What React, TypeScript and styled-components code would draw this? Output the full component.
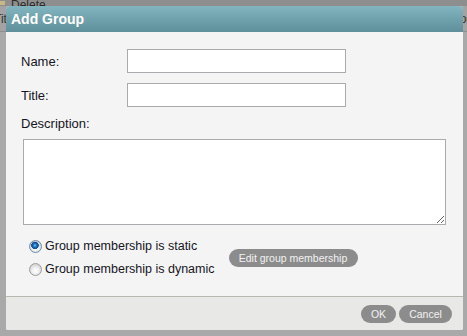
import React from "react";
import styled, { createGlobalStyle } from "styled-components";

const GlobalStyle = createGlobalStyle`
    html, body {
        margin: 0;
        padding: 0;
        background: #aaaaaa;
    }
    body {
        font-family: "Liberation Sans", Arial, sans-serif;
    }
`

const Page = styled.div`
    position: relative;
    width: 467px;
    height: 336px;
    overflow: hidden;
    background: #a9a9a9;
`

const Toolbar = styled.div`
    height: 6px;
    background: #8e8e8e;
    display: flex;
    align-items: flex-end;
    gap: 6px;
    overflow: hidden;
`

const ToolIcon = styled.span`
    width: 5px;
    height: 4px;
    background: #c9b887;
    margin-bottom: 1px;
`

const ToolText = styled.span`
    font-size: 12px;
    line-height: 12px;
    color: #2a2a2a;
    margin-bottom: -5px;
`

const HeaderRow = styled.div`
    height: 25px;
    background: #a3a3a3;
    border-bottom: 1px solid #8f8f8f;
    display: flex;
    justify-content: space-between;
    align-items: center;
    font-size: 12px;
    color: #333;
`

const HeaderCell = styled.span<{ $shift: number }>`
    margin-left: ${(p) => p.$shift}px;
    margin-right: ${(p) => (p.$shift < 0 ? 0 : -6)}px;
`

const Dialog = styled.div`
    position: absolute;
    left: 6px;
    top: 6px;
    width: 457px;
    height: 324px;
    display: flex;
    flex-direction: column;
    border-radius: 4px 4px 2px 2px;
    overflow: hidden;
    background: #f4f4f4;
`

const TitleBar = styled.div`
    height: 26px;
    display: flex;
    align-items: center;
    padding-left: 5px;
    background: linear-gradient(#82b5bf, #5e8f9a);
    color: #ffffff;
    font-weight: bold;
    font-size: 14px;
`

const Body = styled.div`
    flex: 1;
    padding: 17px 0 0 0;
    display: flex;
    flex-direction: column;
`

const FormGrid = styled.div`
    display: grid;
    grid-template-columns: 106px 219px;
    row-gap: 10px;
    padding-left: 15px;
    align-items: center;
`

const Label = styled.label`
    font-size: 13px;
    line-height: 15px;
    color: #141424;
`

const DescLabel = styled(Label)`
    display: block;
    margin: 9px 0 0 15px;
`

const TextInput = styled.input`
    box-sizing: border-box;
    width: 219px;
    height: 24px;
    border: 1px solid #a9a9ae;
    background: #fff;
    margin: 0;
    font-size: 13px;
`

const TextArea = styled.textarea`
    box-sizing: border-box;
    display: block;
    width: 423px;
    height: 86px;
    margin: 8px 0 0 17px;
    border: 1px solid #a9a9ae;
    background: #fff;
    font-family: inherit;
    font-size: 13px;
`

const MembershipRow = styled.div`
    display: flex;
    align-items: center;
    gap: 14px;
    margin: 13px 0 0 23px;
`

const RadioColumn = styled.div`
    display: flex;
    flex-direction: column;
    gap: 7px;
`

const RadioLabel = styled.label`
    display: flex;
    align-items: center;
    gap: 3px;
    height: 16px;
    font-size: 12.5px;
    color: #141424;
`

const Radio = styled.input.attrs({ type: "radio" })`
    appearance: none;
    width: 13px;
    height: 13px;
    margin: 0;
    border-radius: 50%;
    border: 1px solid #9c9c9c;
    box-sizing: border-box;
    background: radial-gradient(circle at 50% 60%, #ffffff 0, #f2f2f2 3px, #d6d6d6 6px);

    &:checked {
        border-color: #6f8aa6;
        background:
            radial-gradient(circle at 45% 40%, #7cc6f2 0, #1f7ccc 1.5px, #0d4f9a 3px, #2a5a8c 3.6px, transparent 4px),
            radial-gradient(circle at 50% 60%, #ffffff 0, #eef2f6 3px, #cfd6de 6px);
    }
`

const PillButton = styled.button<{ $width: number }>`
    width: ${(p) => p.$width}px;
    height: 18px;
    padding: 0;
    border: none;
    border-radius: 9px;
    background: #8c8c8c;
    color: #f2f2f2;
    font-family: inherit;
    font-size: 10.5px;
    line-height: 18px;
    text-align: center;
    cursor: pointer;
`

const Footer = styled.div`
    box-sizing: border-box;
    height: 34px;
    border-top: 1px solid #b6b9ae;
    background: #e8e8e6;
    display: flex;
    justify-content: flex-end;
    align-items: center;
    gap: 3px;
    padding-right: 11px;
`

export default function App() {
    return (
        <Page>
            <GlobalStyle />
            <Toolbar>
                <ToolIcon />
                <ToolText>Delete</ToolText>
            </Toolbar>
            <HeaderRow>
                <HeaderCell $shift={-6}>Title</HeaderCell>
                <HeaderCell $shift={0}>Type</HeaderCell>
            </HeaderRow>
            <Dialog>
                <TitleBar>Add Group</TitleBar>
                <Body>
                    <FormGrid>
                        <Label htmlFor="name">Name:</Label>
                        <TextInput id="name" />
                        <Label htmlFor="title">Title:</Label>
                        <TextInput id="title" />
                    </FormGrid>
                    <DescLabel htmlFor="desc">Description:</DescLabel>
                    <TextArea id="desc" />
                    <MembershipRow>
                        <RadioColumn>
                            <RadioLabel>
                                <Radio name="membership" defaultChecked />
                                Group membership is static
                            </RadioLabel>
                            <RadioLabel>
                                <Radio name="membership" />
                                Group membership is dynamic
                            </RadioLabel>
                        </RadioColumn>
                        <PillButton $width={129}>Edit group membership</PillButton>
                    </MembershipRow>
                </Body>
                <Footer>
                    <PillButton $width={35}>OK</PillButton>
                    <PillButton $width={53}>Cancel</PillButton>
                </Footer>
            </Dialog>
        </Page>
    );
}
